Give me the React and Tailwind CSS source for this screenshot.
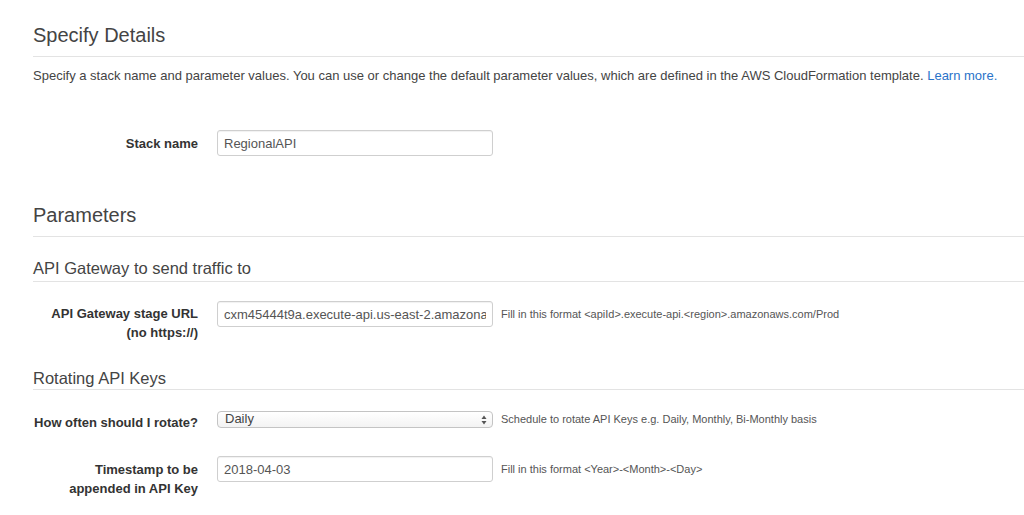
import React from 'react';

const font = { fontFamily: '"Liberation Sans", Arial, sans-serif' };

const Label = ({ children, className = '' }) => (
  <div className={`w-[198px] shrink-0 text-right text-[13px] font-bold text-[#333] leading-[19px] ${className}`}>
    {children}
  </div>
);

const TextInput = ({ value }) => (
  <input
    readOnly
    defaultValue={value}
    className="w-[276px] h-[26px] shrink-0 border border-[#cfcfcf] rounded-[3px] bg-white shadow-[inset_0_1px_1px_rgba(0,0,0,0.06)] px-[6px] text-[13px] text-[#555] outline-none"
    style={font}
  />
);

const Help = ({ children }) => (
  <span className="ml-[8px] text-[11px] text-[#555] whitespace-nowrap">{children}</span>
);

const SubHeading = ({ children, className = '' }) => (
  <div className={`text-[16.5px] leading-[20px] text-[#444] border-b border-[#e3e3e3] ${className}`}>
    {children}
  </div>
);

export default function App() {
  return (
    <div className="w-[1024px] h-[515px] bg-white overflow-hidden pl-[33px]" style={font}>
      {/* Specify Details */}
      <div className="pt-[23px] pb-[9px] border-b border-[#e3e3e3] text-[20px] leading-[24px] text-[#444]">
        Specify Details
      </div>
      <p className="mt-[11px] text-[13px] leading-[16px] text-[#444] whitespace-nowrap">
        Specify a stack name and parameter values. You can use or change the default parameter values, which are defined in the AWS CloudFormation template.{' '}
        <a className="text-[#2a73c9]">Learn more.</a>
      </p>

      <div className="mt-[46px] flex items-center -ml-[33px]">
        <Label>Stack name</Label>
        <div className="ml-[19px]">
          <TextInput value="RegionalAPI" />
        </div>
      </div>

      {/* Parameters */}
      <div className="mt-[47px] pb-[9px] border-b border-[#e3e3e3] text-[20px] leading-[24px] text-[#444]">
        Parameters
      </div>

      <SubHeading className="mt-[21px] pb-[3px]">API Gateway to send traffic to</SubHeading>

      <div className="mt-[19px] flex items-start -ml-[33px]">
        <Label className="pt-[3px]">
          API Gateway stage URL
          <br />
          (no https://)
        </Label>
        <div className="ml-[19px] flex items-center">
          <TextInput value="cxm45444t9a.execute-api.us-east-2.amazonaws.com/Prod" />
          <Help>Fill in this format &lt;apiId&gt;.execute-api.&lt;region&gt;.amazonaws.com/Prod</Help>
        </div>
      </div>

      <SubHeading className="mt-[26px] pb-[1px]">Rotating API Keys</SubHeading>

      <div className="mt-[21px] flex items-start -ml-[33px]">
        <Label className="pt-[2px]">How often should I rotate?</Label>
        <div className="ml-[19px] flex items-center">
          <button
            type="button"
            className="w-[276px] h-[17px] shrink-0 border border-[#c4c4c4] rounded-[4px] bg-gradient-to-b from-white to-[#f3f3f3] flex items-center justify-between pl-[7px] pr-[5px] text-[13px] leading-[15px] text-[#444]"
            style={font}
          >
            <span className="-mt-[2px]">Daily</span>
            <svg width="6" height="10" viewBox="0 0 6 10">
              <path d="M3 0.5 L5.5 4 L0.5 4 Z" fill="#555" />
              <path d="M3 9.5 L5.5 6 L0.5 6 Z" fill="#555" />
            </svg>
          </button>
          <Help>Schedule to rotate API Keys e.g. Daily, Monthly, Bi-Monthly basis</Help>
        </div>
      </div>

      <div className="mt-[24px] flex items-start -ml-[33px]">
        <Label className="pt-[4px]">
          Timestamp to be
          <br />
          appended in API Key
        </Label>
        <div className="ml-[19px] flex items-center">
          <TextInput value="2018-04-03" />
          <Help>Fill in this format &lt;Year&gt;-&lt;Month&gt;-&lt;Day&gt;</Help>
        </div>
      </div>
    </div>
  );
}
